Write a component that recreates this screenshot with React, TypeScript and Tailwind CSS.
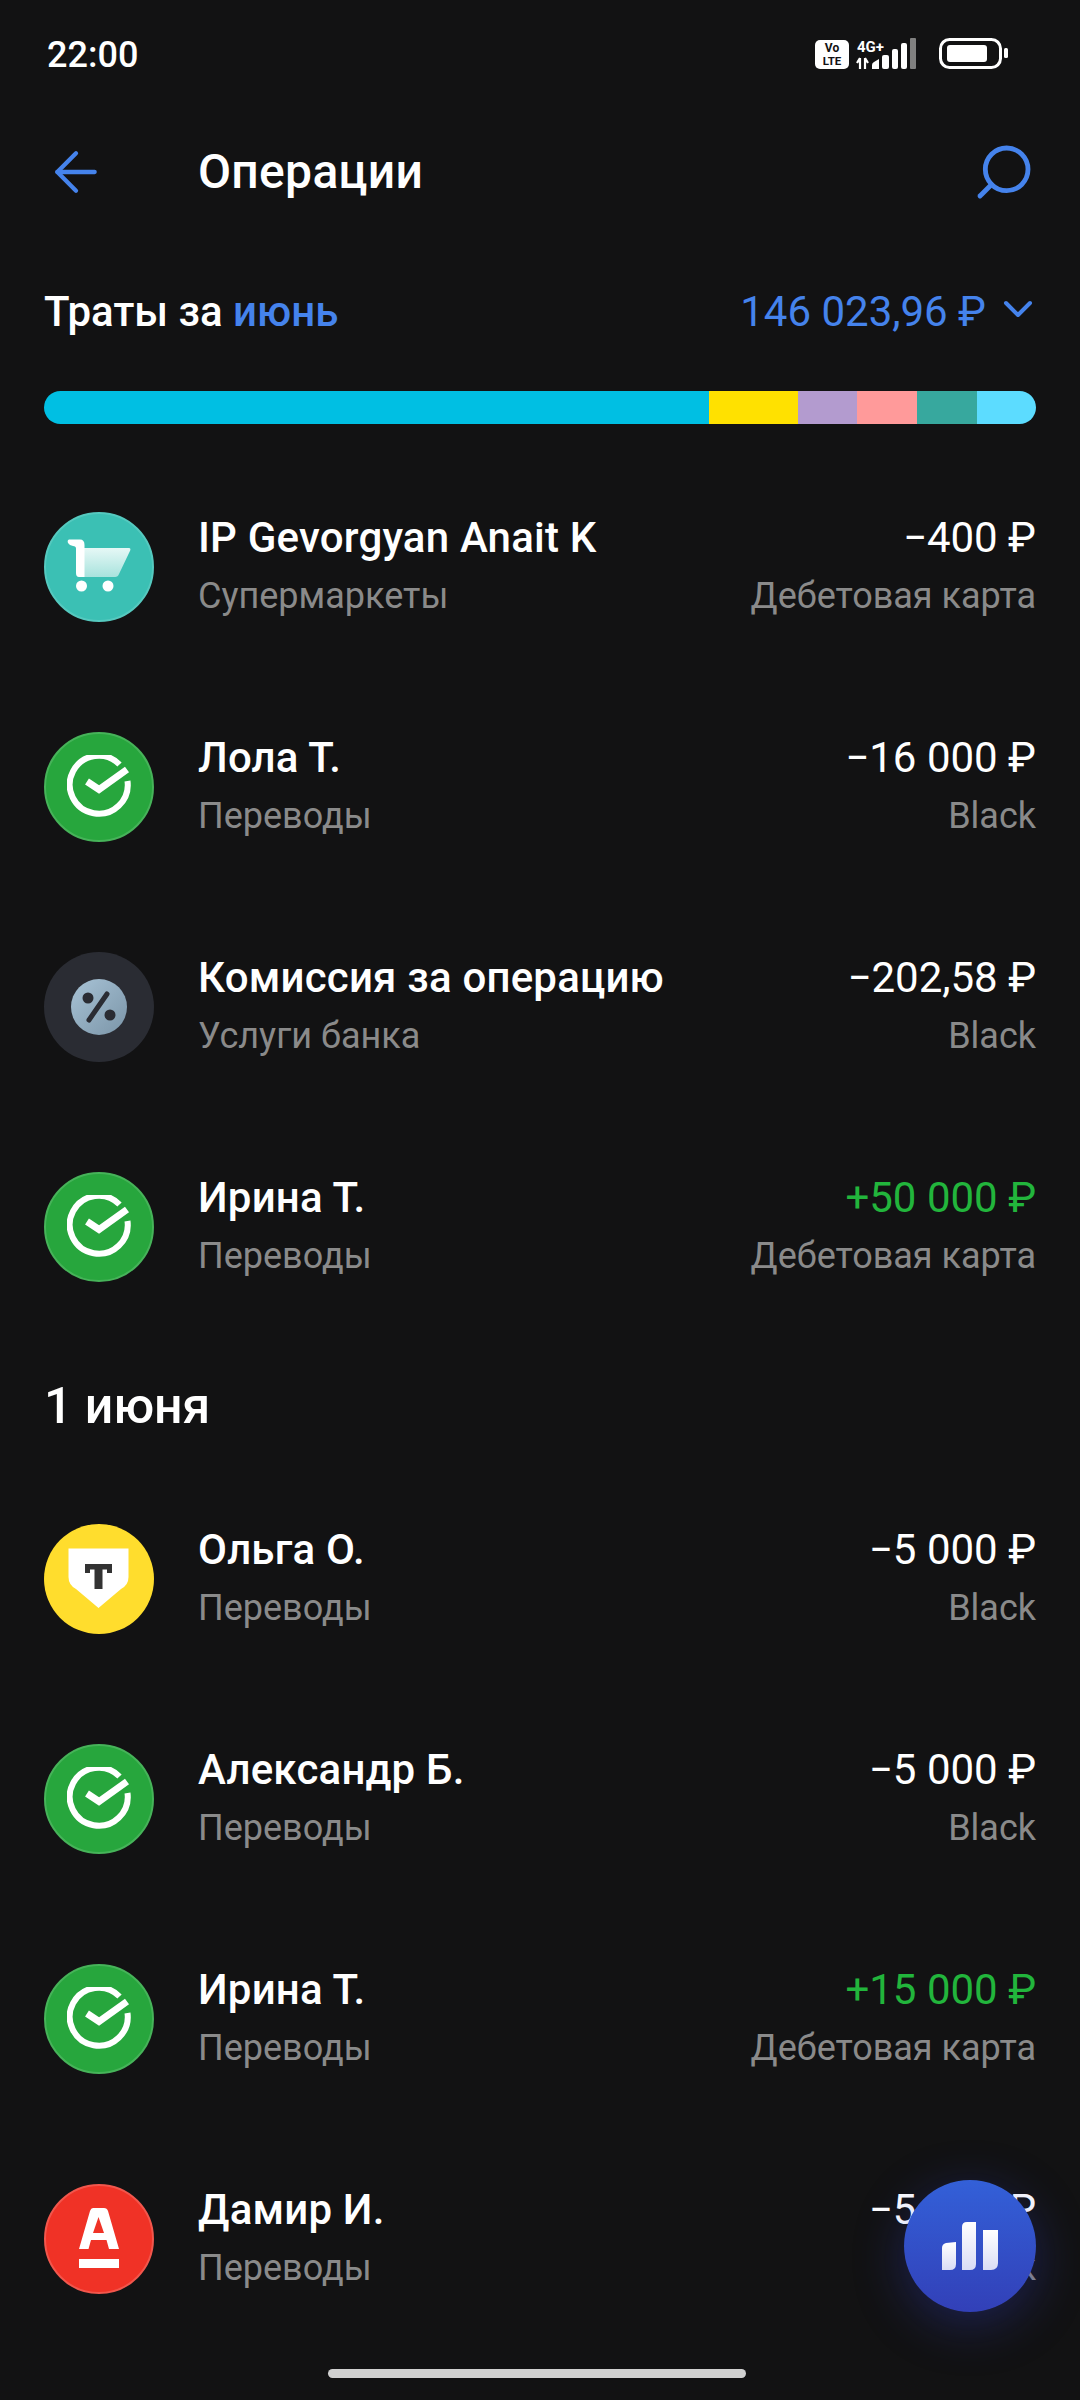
import React from "react";
import { ArrowLeft, ChevronDown, Search } from "lucide-react";

function Sber() {
  return (
    <div className="w-[110px] h-[110px] rounded-full bg-[#27a63d] border-2 border-[#46b359] shrink-0 flex items-center justify-center">
      <svg width="64" height="64" viewBox="0 0 64 64" fill="none" stroke="#fff">
        <path d="M52.5 9.5A29 29 0 1 0 60.5 26" strokeWidth="6" />
        <path d="M20 26.5L32 34.5L60 14.5" strokeWidth="7" />
      </svg>
    </div>
  );
}

function Cart() {
  return (
    <div className="w-[110px] h-[110px] rounded-full bg-[#3bc0b4] border-2 border-[#55c9bf] shrink-0 flex items-center justify-center">
      <svg width="64" height="56" viewBox="0 0 64 56">
        <defs>
          <linearGradient id="cartg" x1="0" y1="0" x2="0" y2="1">
            <stop offset="0" stopColor="#e6f8f6" />
            <stop offset="1" stopColor="#a8e3dd" />
          </linearGradient>
        </defs>
        <path d="M17 9H62Q64 9 63.2 11.5L52 35Q51 38 48 38H17Z" fill="url(#cartg)" />
        <path d="M2 0.5H13Q17.5 0.5 17.5 6V38H12Q9 38 9 34V9.5Q9 7 6 7Q3 7 1 4Q0 1 2 0.5Z" fill="#fff" />
        <circle cx="14.5" cy="47" r="5.5" fill="#fff" />
        <circle cx="41" cy="47" r="5.5" fill="#fff" />
      </svg>
    </div>
  );
}

function Percent() {
  return (
    <div className="w-[110px] h-[110px] rounded-full bg-[#2a2c33] shrink-0 flex items-center justify-center">
      <svg width="56" height="56" viewBox="0 0 56 56">
        <defs>
          <linearGradient id="pctg" x1="0" y1="0" x2="1" y2="1">
            <stop offset="0" stopColor="#a8c3d6" />
            <stop offset="1" stopColor="#7b95a8" />
          </linearGradient>
        </defs>
        <circle cx="28" cy="28" r="28" fill="url(#pctg)" />
        <circle cx="17" cy="19" r="5.5" fill="#2a2c33" />
        <circle cx="39" cy="36" r="5.5" fill="#2a2c33" />
        <path d="M18 41L36 15" stroke="#2a2c33" strokeWidth="5" strokeLinecap="round" />
      </svg>
    </div>
  );
}

function Tbank() {
  return (
    <div className="w-[110px] h-[110px] rounded-full bg-[#ffdd2d] shrink-0 flex items-center justify-center">
      <svg width="62" height="62" viewBox="0 0 62 62">
        <path d="M0.5 0.5H60.5V29Q60.5 37 53 41L30.5 60L8 41Q0.5 37 0.5 29Z" fill="#fff" />
        <path d="M17 16H44V25H39V21.5H34.5V41H26.5V21.5H22V25H17Z" fill="#333" />
      </svg>
    </div>
  );
}

function Alfa() {
  return (
    <div className="w-[110px] h-[110px] rounded-full bg-[#f03226] border-2 border-[#f2564c] shrink-0 flex items-center justify-center">
      <svg width="42" height="62" viewBox="0 0 42 62" fill="#fff">
        <path fillRule="evenodd" d="M15 0H26Q29 0 30 3L41 41H31L28.5 32H13L10.5 41H1L12 3Q13 0 15 0ZM20.5 9L15 25H26Z" />
        <rect x="1" y="51" width="40" height="9" />
      </svg>
    </div>
  );
}

function StatusIcons() {
  return (
    <svg width="200" height="34" viewBox="0 0 200 34" className="block">
      <rect x="1" y="2" width="34" height="29" rx="5" fill="#fff" />
      <text x="18" y="14" textAnchor="middle" fontSize="12" fontWeight="700" fill="#121212" fontFamily="Roboto, sans-serif">Vo</text>
      <text x="18" y="27" textAnchor="middle" fontSize="11.5" fontWeight="700" fill="#121212" fontFamily="Roboto, sans-serif">LTE</text>
      <text x="43" y="14" fontSize="15" fontWeight="700" fill="#fff" fontFamily="Roboto, sans-serif">4G+</text>
      <path d="M46 20V31M43 25L46 20M51 20V31M51 20L54 25" stroke="#fff" strokeWidth="2.2" fill="none" />
      <path d="M58 31V27Q58 25 60 24L65 21V31Z" fill="#fff" />
      <rect x="68" y="17" width="7" height="14" rx="2" fill="#fff" />
      <rect x="78" y="11" width="6" height="20" rx="2" fill="#fff" />
      <rect x="87" y="5" width="6" height="26" rx="2" fill="#fff" />
      <rect x="96" y="0" width="6" height="31" rx="1" fill="#808080" />
      <rect x="126.5" y="1.5" width="60" height="28" rx="9" fill="none" stroke="#fff" strokeWidth="3" />
      <rect x="133" y="7" width="40" height="17" rx="3" fill="#fff" />
      <rect x="190" y="10" width="4" height="10" rx="1.5" fill="#fff" />
    </svg>
  );
}

type RowData = { icon: React.ReactNode; name: string; cat: string; amount: string; card: string; plus?: boolean };

function Row({ icon, name, cat, amount, card, plus }: RowData) {
  return (
    <div className="h-[220px] flex items-center px-[44px]">
      {icon}
      <div className="ml-[44px] flex-1 min-w-0 flex justify-between">
        <div>
          <div className="text-[42px] leading-[58px] font-medium text-white tracking-[0.2px]">{name}</div>
          <div className="text-[36px] leading-[58px] text-[#8a8a8a]">{cat}</div>
        </div>
        <div className="text-right">
          <div className={`text-[42px] leading-[58px] ${plus ? "text-[#22b53c]" : "text-white"}`}>{amount}</div>
          <div className="text-[36px] leading-[58px] text-[#8a8a8a]">{card}</div>
        </div>
      </div>
    </div>
  );
}

const before: RowData[] = [
  { icon: <Cart />, name: "IP Gevorgyan Anait K", cat: "Супермаркеты", amount: "−400 ₽", card: "Дебетовая карта" },
  { icon: <Sber />, name: "Лола Т.", cat: "Переводы", amount: "−16 000 ₽", card: "Black" },
  { icon: <Percent />, name: "Комиссия за операцию", cat: "Услуги банка", amount: "−202,58 ₽", card: "Black" },
  { icon: <Sber />, name: "Ирина Т.", cat: "Переводы", amount: "+50 000 ₽", card: "Дебетовая карта", plus: true },
];

const after: RowData[] = [
  { icon: <Tbank />, name: "Ольга О.", cat: "Переводы", amount: "−5 000 ₽", card: "Black" },
  { icon: <Sber />, name: "Александр Б.", cat: "Переводы", amount: "−5 000 ₽", card: "Black" },
  { icon: <Sber />, name: "Ирина Т.", cat: "Переводы", amount: "+15 000 ₽", card: "Дебетовая карта", plus: true },
  { icon: <Alfa />, name: "Дамир И.", cat: "Переводы", amount: "−5 000 ₽", card: "Black" },
];

export default function App() {
  return (
    <div className="relative w-[1080px] h-[2400px] overflow-hidden bg-[#121213] text-white font-['Roboto',sans-serif]">
      <div className="h-[110px] flex items-center justify-between pl-[47px] pr-[66px]">
        <span className="text-[36px] font-medium">22:00</span>
        <StatusIcons />
      </div>

      <div className="h-[124px] flex items-center pl-[44px] pr-[44px]">
        <ArrowLeft size={60} strokeWidth={4} color="#4583ec" absoluteStrokeWidth className="w-[64px] h-[64px]" />
        <span className="ml-[90px] flex-1 text-[48px] font-medium tracking-[0.3px]">Операции</span>
        <Search size={66} strokeWidth={5} color="#4583ec" absoluteStrokeWidth className="w-[64px] h-[64px] scale-x-[-1]" />
      </div>

      <div className="h-[157px] flex items-center justify-between px-[44px] pb-[3px]">
        <span className="text-[42px] font-medium">
          Траты за <span className="text-[#4583ec]">июнь</span>
        </span>
        <span className="flex items-center text-[42px] text-[#4583ec]">
          146 023,96 ₽
          <ChevronDown size={48} strokeWidth={4} absoluteStrokeWidth className="ml-[8px] w-[48px] h-[48px] -mt-[4px] -mr-[6px]" />
        </span>
      </div>

      <div className="mx-[44px] h-[33px] rounded-full overflow-hidden flex">
        <div className="w-[665px] bg-[#00bfe3]" />
        <div className="w-[89px] bg-[#ffe100]" />
        <div className="w-[59px] bg-[#b39bcf]" />
        <div className="w-[60px] bg-[#ff9a9a]" />
        <div className="w-[60px] bg-[#37a89e]" />
        <div className="flex-1 bg-[#5cdcff]" />
      </div>

      <div className="pt-[33px]">
        {before.map((r) => (
          <Row key={r.name + r.amount} {...r} />
        ))}
        <div className="h-[132px] flex items-center px-[44px] pb-[-0px]">
          <span className="text-[50px] font-medium pt-[6px]">1 июня</span>
        </div>
        {after.map((r) => (
          <Row key={r.name + r.amount} {...r} />
        ))}
      </div>

      <div className="absolute left-[904px] top-[2180px] w-[132px] h-[132px] rounded-full bg-[linear-gradient(to_bottom,#3360d8,#3240b8)] shadow-[0_12px_50px_rgba(50,64,200,0.35)] flex items-center justify-center">
        <svg width="58" height="50" viewBox="0 0 58 50" fill="#eef0fb">
          <defs>
            <linearGradient id="fabg" x1="0" y1="0" x2="0" y2="1">
              <stop offset="0" stopColor="#ffffff" />
              <stop offset="1" stopColor="#d9dcf5" />
            </linearGradient>
          </defs>
          <path d="M1 27Q1 23 5 22L15 21V43Q15 49 9 49H1Z" fill="url(#fabg)" />
          <path d="M21 6Q21 1 26 1H35V43Q35 49 29 49H21Z" fill="url(#fabg)" />
          <path d="M42 9H57V42Q57 49 50 49H42Z" fill="url(#fabg)" />
        </svg>
      </div>

      <div className="absolute left-[328px] top-[2369px] w-[418px] h-[9px] rounded-full bg-[#d0d0d0]" />
    </div>
  );
}
